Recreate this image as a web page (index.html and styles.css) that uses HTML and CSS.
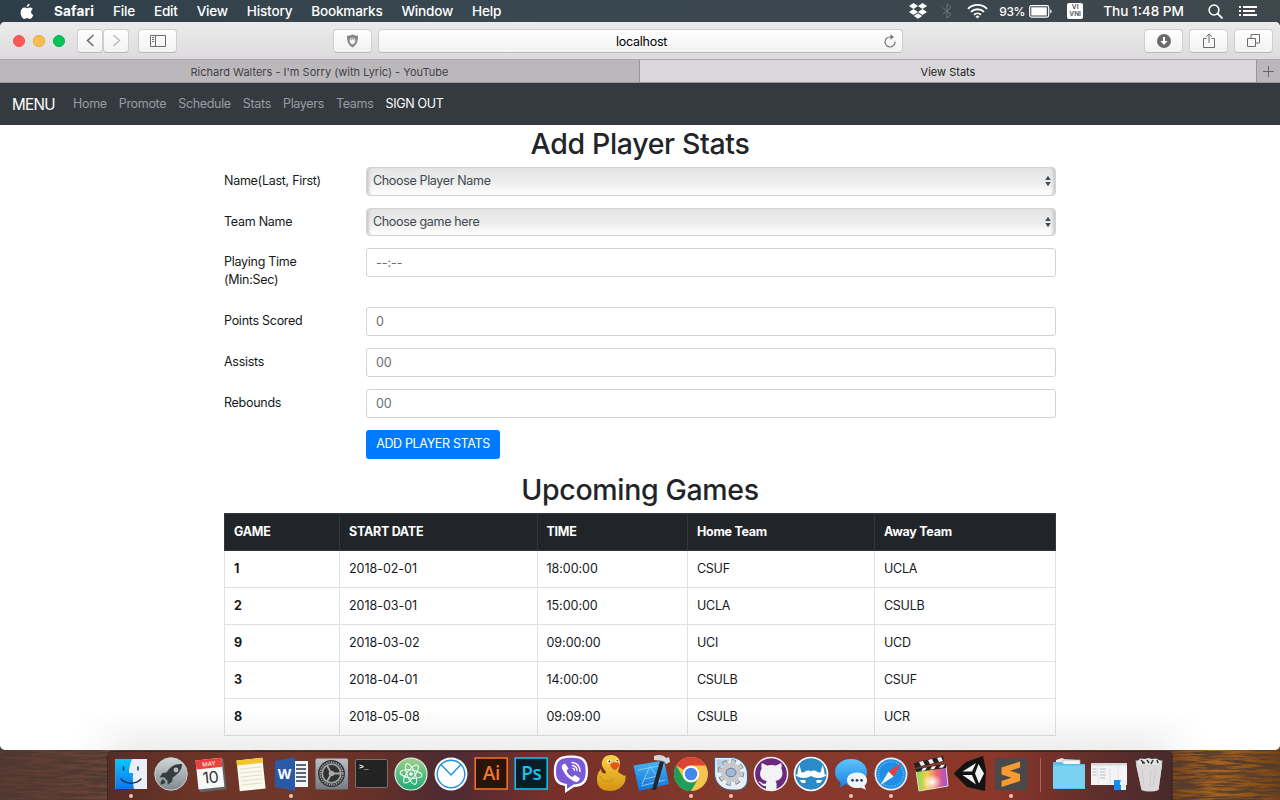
FILE: index.html
```html
<!DOCTYPE html>
<html lang="en">
<head>
<meta charset="utf-8">
<title>View Stats</title>
<link rel="stylesheet" href="styles.css">
</head>
<body>
<div class="desktop">
  <header class="menubar">
    <svg class="apple" width="14" height="17" viewBox="0 0 14 17" fill="#fff"><path d="M9.6.8c.1 1.800-1.300 3.300-2.900 3.300C6.500 2.500 8 .9 9.600.8zM6.900 5.200c.6 0 1.500-.8 2.900-.8 1.300 0 2.400.7 3 1.600-2.500 1.500-2.100 4.900.5 5.900-.6 1.700-1.900 4-3.400 4-1.100 0-1.500-.7-2.800-.7s-1.700.7-2.800.7C2.600 16 .6 12.600.6 9.500c0-3 1.900-5 4-5 1.100 0 1.700.7 2.300.7z"/></svg>
    <nav class="menus"><b>Safari</b><span>File</span><span>Edit</span><span>View</span><span>History</span><span>Bookmarks</span><span>Window</span><span>Help</span></nav>
    <div class="status">
      <svg width="20" height="18" viewBox="0 0 20 18" fill="#fff"><path d="M5.500 1 10 4 5.500 7 1 4zM14.500 1 19 4l-4.500 3L10 4zM5.500 7 10 10l-4.500 3L1 10zM14.500 7 19 10l-4.500 3L10 10zM10 11.200l4.200 2.800-4.200 2.800L5.800 14z"/></svg>
      <svg class="bt" width="10" height="16" viewBox="0 0 10 16" fill="none" stroke="#6c757a"><path d="M.5 4.500 9 11.500 5 15V1l4 3.500-8.500 7"/></svg>
      <svg class="wifi" width="21" height="16" viewBox="0 0 21 16" fill="none" stroke="#fff" stroke-width="1.900"><path d="M1 5.800a13.500 13.500 0 0 1 19 0M4 8.900a9.200 9.200 0 0 1 13 0M7 11.800a5 5 0 0 1 7 0"/><path d="M10.500 15.500l-2-2a2.800 2.800 0 0 1 4 0z" fill="#fff" stroke="none"/></svg>
      <span class="pct">93%</span>
      <svg class="bat" width="24" height="13" viewBox="0 0 24 13"><rect x=".7" y=".7" width="19" height="11.400" rx="1.800" fill="none" stroke="#fff" stroke-width="1.200"/><rect x="2.300" y="2.300" width="15.500" height="8.200" fill="#fff"/><path d="M21.200 4.300c2 .8 2 3.400 0 4.200z" fill="#fff"/></svg>
      <span class="vni"><i>VI</i><i>VNI</i></span>
      <span class="clock">Thu 1:48 PM</span>
      <svg class="search" width="15" height="15" viewBox="0 0 15 15" fill="none" stroke="#fff" stroke-width="1.500"><circle cx="6" cy="6" r="4.900"/><path d="M9.500 9.500l5 5" stroke-width="1.800"/></svg>
      <svg width="19" height="12" viewBox="0 0 19 12" fill="#fff"><path d="M0 1h2v2H0zM4 1h14v2H4zM0 5h2v2H0zM4 5h12v2H4zM0 9h2v2H0zM4 9h14v2H4z"/></svg>
    </div>
  </header>

  <main class="window">
    <div class="toolbar">
      <div class="lights"><i class="red"></i><i class="yellow"></i><i class="green"></i></div>
      <div class="history"><span class="btn"><svg width="9" height="13" viewBox="0 0 9 13" fill="none" stroke="#696969" stroke-width="1.500"><path d="M7.500 1 1.500 6.500l6 5.500"/></svg></span><span class="btn"><svg width="9" height="13" viewBox="0 0 9 13" fill="none" stroke="#bcbcbc" stroke-width="1.500"><path d="M1.500 1l6 5.500-6 5.500"/></svg></span></div>
      <span class="btn wide sidebar"><svg width="16" height="12" viewBox="0 0 16 12" fill="none" stroke="#6c6c6c"><path d="M.5.500h15v11H.5zM5.500.500v11M2 2.500h2M2 4.500h2M2 6.500h2"/></svg></span>
      <span class="btn wide shield"><svg width="13" height="14" viewBox="0 0 13 14"><path d="M6.500.5C8.500 1.500 10 1.700 12 1.700c0 6-1.300 9.300-5.500 11.800C2.300 11 1 7.700 1 1.700c2 0 3.500-.2 5.500-1.200z" fill="#848484"/><path d="M6.500 3.600a3.200 3.200 0 0 1 3 3.200c0 1.700-1 3-3 4-2-1-3-2.300-3-4a3.200 3.200 0 0 1 3-3.200z" fill="#e4e4e4"/><path d="M4.800 6.200h3.400v2.600H4.800z" fill="#fff"/><path d="M5.300 6.200v-.6a1.200 1.200 0 0 1 2.400 0v.6" fill="none" stroke="#848484" stroke-width=".8"/></svg></span>
      <div class="btn address"><span>localhost</span><svg class="reload" width="12" height="14" viewBox="0 0 12 14" fill="none" stroke="#757575" stroke-width="1.200"><path d="M11 7.500A5 5 0 1 1 6 3h2"/><path d="M6.500.300 10 3 6.500 5.700z" fill="#757575" stroke="none"/></svg></div>
      <span class="btn wide dl"><svg width="14" height="14" viewBox="0 0 14 14"><circle cx="7" cy="7" r="7" fill="#6b6b6b"/><path d="M6 3h2v4h2.600L7 11 3.400 7H6z" fill="#fff"/></svg></span>
      <span class="btn wide"><svg width="12" height="16" viewBox="0 0 12 16" fill="none" stroke="#6c6c6c"><path d="M3.500 5.500h-3v9h11v-9h-3M6 10V1M3.300 3.700 6 1l2.700 2.700"/></svg></span>
      <span class="btn wide"><svg width="13" height="13" viewBox="0 0 13 13" fill="none" stroke="#6c6c6c"><path d="M.5 4.500h8v8h-8zM4 4.500v-4h8.500V9h-4"/></svg></span>
    </div>
    <div class="tabs"><div class="tab">Richard Walters - I'm Sorry (with Lyric) - YouTube</div><div class="tab active">View Stats</div><div class="plus"><svg width="11" height="11" viewBox="0 0 11 11" stroke="#666"><path d="M5.500 0v11M0 5.500h11"/></svg></div></div>

    <nav class="navbar"><a class="brand">MENU</a><a>Home</a><a>Promote</a><a>Schedule</a><a>Stats</a><a>Players</a><a>Teams</a><a class="out">SIGN OUT</a></nav>

    <section class="container">
      <h2>Add Player Stats</h2>
      <form class="form">
        <label>Name(Last, First)</label><div class="field select"><span>Choose Player Name</span><svg width="6" height="12" viewBox="0 0 6 12" fill="#454c53"><path d="M3 .8 5.800 5H.2zM3 11.200.2 7h5.600z"/></svg></div>
        <label>Team Name</label><div class="field select second"><span>Choose game here</span><svg width="6" height="12" viewBox="0 0 6 12" fill="#454c53"><path d="M3 .8 5.800 5H.2zM3 11.200.2 7h5.600z"/></svg></div>
        <label class="tall">Playing Time<br>(Min:Sec)</label><div class="field num">--:--</div>
        <label>Points Scored</label><div class="field num">0</div>
        <label>Assists</label><div class="field num">00</div>
        <label>Rebounds</label><div class="field num">00</div>
        <button type="button">ADD PLAYER STATS</button>
      </form>
      <h2 class="games">Upcoming Games</h2>
      <table>
        <colgroup><col class="c1"><col class="c2"><col class="c3"><col class="c4"><col class="c5"></colgroup>
        <thead><tr><th>GAME</th><th>START DATE</th><th>TIME</th><th>Home Team</th><th>Away Team</th></tr></thead>
        <tbody>
          <tr><th>1</th><td class="num">2018-02-01</td><td class="num">18:00:00</td><td>CSUF</td><td>UCLA</td></tr>
          <tr><th>2</th><td class="num">2018-03-01</td><td class="num">15:00:00</td><td>UCLA</td><td>CSULB</td></tr>
          <tr><th>9</th><td class="num">2018-03-02</td><td class="num">09:00:00</td><td>UCI</td><td>UCD</td></tr>
          <tr><th>3</th><td class="num">2018-04-01</td><td class="num">14:00:00</td><td>CSULB</td><td>CSUF</td></tr>
          <tr><th>8</th><td class="num">2018-05-08</td><td class="num">09:09:00</td><td>CSULB</td><td>UCR</td></tr>
        </tbody>
      </table>
    </section>
    <div class="shade"></div>
  </main>

  <footer class="wallpaper">
    <svg class="wood" width="1280" height="56" viewBox="0 0 1280 56">
      <defs>
        <linearGradient id="base" x1="0" x2="1" y1="0" y2="0"><stop offset="0" stop-color="#5a3a32"/><stop offset=".08" stop-color="#6a443a"/><stop offset=".9" stop-color="#6a3a18"/><stop offset=".95" stop-color="#a8641f"/><stop offset="1" stop-color="#7a4515"/></linearGradient>
        <filter id="grain" x="0" y="0" width="100%" height="100%"><feTurbulence type="fractalNoise" baseFrequency="0.035 0.38" numOctaves="4" seed="7"/><feColorMatrix values="0 0 0 0 .07  0 0 0 0 .04  0 0 0 0 .03  4 0 0 0 -1.500"/></filter>
      </defs>
      <rect width="1280" height="56" fill="url(#base)"/><rect width="1280" height="56" filter="url(#grain)" opacity=".8"/>
    </svg>
    <div class="dock">
      <svg class="app" viewBox="0 0 40 48"><defs><linearGradient id="fb" x1="0" x2="0" y1="0" y2="1"><stop offset="0" stop-color="#06c8fb"/><stop offset="1" stop-color="#1572ee"/></linearGradient></defs><path d="M4.500 7H36v30H4.500z" fill="#e9eff8"/><path d="M4.500 7H21c-2 5-3 9-3 14h4c-.3 6 0 11 1 16H4.500z" fill="url(#fb)"/><path d="M12.500 15v3M27 15v3M10 27c5 5.500 15 5.500 20 0" fill="none" stroke="#143250" stroke-width="1.500" stroke-linecap="round"/><circle class="run" cx="20" cy="44" r="2"/></svg>
      <svg class="app" viewBox="0 0 40 48"><defs><linearGradient id="rk" x1="0" x2="0" y1="0" y2="1"><stop offset="0" stop-color="#d1d6d8"/><stop offset="1" stop-color="#7e888c"/></linearGradient></defs><circle cx="20" cy="22" r="16.300" fill="url(#rk)" stroke="#c5cccc" stroke-width="1"/><path d="M31 12c-7-.500-12 3-15.500 8.500l-4 .5-3 4.500 4.500-.3 3.500 3.500.2 4 4.500-3.200.5-4C27 22 31 18 31 12zM12 27c-2 1-2.500 3.500-2.500 5.500 2 0 4-.6 5-2.500z" fill="#353c40"/><circle cx="25" cy="18" r="2.400" fill="#b4bcbe"/></svg>
      <svg class="app" viewBox="0 0 40 48"><g transform="rotate(-6 20 22)"><rect x="7" y="8" width="27" height="31" rx="1" fill="#626262"/><rect x="6" y="7" width="26" height="29" fill="#f8f8f8"/><path d="M6 7h26v9H6z" fill="#e8423e"/><text x="19" y="13.800" text-anchor="middle" class="t-month">MAY</text><text x="19" y="31" text-anchor="middle" class="t-day">10</text></g></svg>
      <svg class="app" viewBox="0 0 40 48"><g transform="rotate(-6 20 22)"><rect x="7" y="7" width="26" height="31" fill="#fbf9ec"/><path d="M7 7h26v5H7z" fill="#f5c52c"/><path d="M9 16h22M9 20h22M9 24h22M9 28h22M9 32h22" stroke="#d9d6cb" stroke-width=".8"/></g></svg>
      <svg class="app" viewBox="0 0 40 48"><path d="M22 9h15v26H22z" fill="#f4f5f7"/><path d="M25 13h10M25 17h10M25 21h10M25 25h10M25 29h10" stroke="#28394f" stroke-width="1.600"/><path d="M4 9l20-4v34L4 35z" fill="#285aa7"/><text x="13.500" y="27" text-anchor="middle" class="t-word">W</text><circle class="run" cx="20" cy="44" r="2"/></svg>
      <svg class="app" viewBox="0 0 40 48"><defs><linearGradient id="sp" x1="0" x2="0" y1="0" y2="1"><stop offset="0" stop-color="#b9c1c7"/><stop offset="1" stop-color="#747b80"/></linearGradient></defs><rect x="4.500" y="6.500" width="32.500" height="31" rx="1.500" fill="url(#sp)"/><circle cx="20.500" cy="21.500" r="13.500" fill="#303234"/><circle cx="20.500" cy="21.500" r="11.400" fill="none" stroke="#aaa" stroke-width="1.600" stroke-dasharray="1.300 1.100"/><circle cx="20.500" cy="21.500" r="9.300" fill="none" stroke="#a2a2a2" stroke-width="1.800"/><circle cx="20.500" cy="21.500" r="2.800" fill="#aaa"/><path d="M20.500 21.500h9M20.500 21.500l-4.500-8M20.500 21.500l-4.500 8" stroke="#aaa" stroke-width="1.800"/></svg>
      <svg class="app" viewBox="0 0 40 48"><rect x="4.500" y="7.500" width="32" height="28" rx="1.500" fill="#232323" stroke="#77716f"/><text x="8" y="16.500" class="t-term">&gt;_</text></svg>
      <svg class="app" viewBox="0 0 40 48"><defs><linearGradient id="at" x1="0" x2="0" y1="0" y2="1"><stop offset="0" stop-color="#a2d18b"/><stop offset="1" stop-color="#18ab75"/></linearGradient></defs><circle cx="20" cy="22" r="16" fill="url(#at)" stroke="#e5efe6" stroke-width="1.200"/><g fill="none" stroke="#fff" stroke-width="1"><ellipse cx="20" cy="22" rx="11" ry="4" transform="rotate(8 20 22)"/><ellipse cx="20" cy="22" rx="11" ry="4" transform="rotate(68 20 22)"/><ellipse cx="20" cy="22" rx="11" ry="4" transform="rotate(128 20 22)"/></g><circle cx="20" cy="22" r="1.800" fill="#fff"/></svg>
      <svg class="app" viewBox="0 0 40 48"><circle cx="20" cy="22" r="16.500" fill="#fff"/><circle cx="20" cy="22" r="13.800" fill="none" stroke="#2593e1" stroke-width="1.500"/><path d="M10 12.500l10 10.500 10-10.500" fill="none" stroke="#2593e1" stroke-width="1.500"/></svg>
      <svg class="app" viewBox="0 0 40 48"><rect x="4.200" y="6" width="32" height="31" fill="#2a1407" stroke="#ef6f25" stroke-width="1.600"/><text x="20.300" y="28" text-anchor="middle" class="t-adobe ai">Ai</text></svg>
      <svg class="app" viewBox="0 0 40 48"><rect x="4.200" y="6" width="32" height="31" fill="#071e28" stroke="#0bc1ea" stroke-width="1.600"/><text x="20.300" y="28" text-anchor="middle" class="t-adobe ps">Ps</text></svg>
      <svg class="app" viewBox="0 0 40 48"><path d="M20 3.500c12 0 17 3.500 17 16s-6 15-14 15.500L14 41v-7C6 32.500 2.800 29 2.800 19.500 2.800 7 8 3.500 20 3.500z" fill="#fff"/><path d="M20 5.700c11 0 14.700 3 14.700 13.800S29.500 32 22.500 32.600L16 37v-5C8.500 31 5 28 5 19.500 5 8.700 9 5.700 20 5.700z" fill="#7b5ad9"/><path d="M14 11.500c-3 1-4 3-2.500 6C14 23 18 27 23.500 29.500c3 1.300 4.500-.5 5.500-3l-5-3.500-2.500 2c-3-1-5-3.500-6-6.500l2-2z" fill="#fff"/><path d="M21 10.500c5 .5 8 4 8 9M21.500 13.500c3 .5 4.500 2.500 4.500 5M22 16.300c1 .2 1.500.8 1.500 2" fill="none" stroke="#fff" stroke-width="1.300" stroke-linecap="round"/></svg>
      <svg class="app" viewBox="0 0 40 48"><defs><linearGradient id="dk" x1="0" x2="0" y1="0" y2="1"><stop offset="0" stop-color="#fbd244"/><stop offset="1" stop-color="#d39312"/></linearGradient></defs><path d="M20 3c6 0 9 4 9 8.500 0 4-2 6.500-2 8.500 5 3 7 5 7.500 3 1.500 8-5 16-15 16S5.500 34 6 26c.2-4 2-7 4-9 0 3 1.500 4.500 4 4.500 1 0 1.500-1 0-3-3-3.500-3.500-6-3-8.500C11.800 6 15 3 20 3z" fill="url(#dk)"/><path d="M19 12c3-2 7-2 8.500-1l1.500 2.500-4 4.500c-3 0-5-2-6-6z" fill="#e5551e"/><circle cx="18" cy="9.500" r="2" fill="#fff"/><circle cx="18.400" cy="9.500" r="1" fill="#222"/><circle cx="26" cy="8.500" r="1.500" fill="#fff"/><circle cx="26.300" cy="8.500" r=".8" fill="#222"/><path d="M9 24c2 6 10 8 14 2" fill="none" stroke="#c98f17"/></svg>
      <svg class="app" viewBox="0 0 40 48"><defs><linearGradient id="xc" x1="0" x2="0" y1="0" y2="1"><stop offset="0" stop-color="#45b5f4"/><stop offset="1" stop-color="#1473d5"/></linearGradient></defs><path d="M2.500 13.500 33 8.500l5 23.500-30 7z" fill="url(#xc)"/><path d="M11 32l8-18 10 15M13 27l14-3M7 18l26-5M10 34l24-6" fill="none" stroke="#90cdf5" stroke-width=".9"/><path d="M29 9l4 1-8 28h-4z" fill="#252525"/><path d="M23 4c5-2 10-1 12 2l3-1 1 5-4 2-2-3-10-1z" fill="#d4d9dc"/></svg>
      <svg class="app" viewBox="0 0 40 48"><circle cx="20" cy="22" r="17" fill="#f3c54f"/><path d="M5.300 13.500a17 17 0 0 1 29.400 0H20a8.500 8.500 0 0 0-7.400 4.300z" fill="#dc4437"/><path d="M5.300 13.500A17 17 0 0 0 20 39l7.400-12.800a8.500 8.500 0 0 1-14.800 0z" fill="#1b9f59"/><circle cx="20" cy="22" r="8.200" fill="#fff"/><circle cx="20" cy="22" r="6.300" fill="#4386ed"/><circle class="run" cx="20" cy="44" r="2"/></svg>
      <svg class="app" viewBox="0 0 40 48"><path d="M3.500 5.500H20A16.500 16.500 0 0 1 36.500 22v6a10 10 0 0 1-10 10H20A16.500 16.500 0 0 1 3.500 22z" fill="#e8eef5" stroke="#445b78" stroke-width="1.200"/><path d="M5.500 7.500h14L6 20z" fill="#b7cde3"/><circle cx="20" cy="20.500" r="11.300" fill="none" stroke="#747b84" stroke-width="4" stroke-dasharray="4.440 4.440"/><circle cx="20" cy="20.500" r="11" fill="none" stroke="#c9ccd1" stroke-width="3" stroke-dasharray="3.440 5.200" stroke-dashoffset="-.4"/><circle cx="20" cy="20.500" r="7.300" fill="none" stroke="#c6c9cd" stroke-width="5"/><ellipse cx="20" cy="20.500" rx="5" ry="4.300" fill="#9db9d8" stroke="#6f7882"/><circle class="run" cx="20" cy="44" r="2"/></svg>
      <svg class="app" viewBox="0 0 40 48"><circle cx="20" cy="22" r="16.600" fill="#6b287d" stroke="#eee" stroke-width="1.500"/><path d="M11 11l5 2.500c3-.8 6-.8 9 0l5-2.500c1 2 .8 4 .3 5.500C33 22 31 28 24.500 29c1.500 2 1 5 1 8.500a16 16 0 0 1-10.500 0V34c-4 .8-5-3-8-4.500 4-.5 4 3.500 8 2 0-1 .3-2 1-2.500C9 28 7.500 22 10.700 16.500 10 14 10.400 12.500 11 11z" fill="#f3f2f4"/></svg>
      <svg class="app" viewBox="0 0 40 48"><circle cx="20" cy="22" r="16.500" fill="#2b8bc8" stroke="#fff" stroke-width="1.600"/><path d="M8.500 13l2 7.500c3 .5 4-2 6.500-2 1.500 0 2.500.5 3 1 .5-.5 1.500-1 3-1 2.500 0 3.500 2.500 6.500 2l2-7.500c1.300 3.500 2 6.500 2 9.500H36c-3 4-11 4.500-16 1.500-5 3-13 2.500-16-1.500h2.500c0-3 .7-6 2-9.500zM8.500 28h6v3h-3.500zM31.500 28h-6v3h3.500z" fill="#fff"/></svg>
      <svg class="app" viewBox="0 0 40 48"><defs><linearGradient id="ms" x1="0" x2="0" y1="0" y2="1"><stop offset="0" stop-color="#60c4fb"/><stop offset="1" stop-color="#1680e5"/></linearGradient></defs><path d="M20 7c9 0 16 5.500 16 13s-7 13-16 13c-2 0-4-.2-5.500-.7L8 36c1.500-2 1.800-3.500 1.500-5.500C6 28 4 24 4 20 4 12.500 11 7 20 7z" fill="url(#ms)"/><path d="M26 20.500c6 0 10 3.300 10 7.700 0 2.500-1 4.300-2.500 5.500l1.500 4-5-2c-1.200.3-2.500.4-4 .4-6 0-10-3.500-10-7.900s4-7.700 10-7.700z" fill="#edf6fb"/><g fill="#303c46"><circle cx="21.500" cy="28.300" r="1.400"/><circle cx="26" cy="28.300" r="1.400"/><circle cx="30.500" cy="28.300" r="1.400"/></g><circle class="run" cx="20" cy="44" r="2"/></svg>
      <svg class="app" viewBox="0 0 40 48"><circle cx="20" cy="22" r="16.500" fill="#e7edf2"/><circle cx="20" cy="22" r="14.800" fill="#218ee5"/><circle cx="20" cy="22" r="12.500" fill="none" stroke="#7cc4f5" stroke-width="1.600" stroke-dasharray=".8 1.650"/><path d="M31 11 22.500 24.500l-5-5z" fill="#ee3b36"/><path d="M9.500 33l8-13.500 5 5z" fill="#f0f3f5"/><circle class="run" cx="20" cy="44" r="2"/></svg>
      <svg class="app" viewBox="0 0 40 48"><defs><linearGradient id="fc"><stop offset="0" stop-color="#82db48"/><stop offset=".35" stop-color="#f4cc50"/><stop offset=".65" stop-color="#ed6370"/><stop offset="1" stop-color="#a04fda"/></linearGradient><radialGradient id="fw"><stop offset="0" stop-color="#fff"/><stop offset="1" stop-color="#fff" stop-opacity="0"/></radialGradient></defs><path d="M5 18l30-4 2 20-29 5z" fill="url(#fc)" stroke="#ddd"/><ellipse cx="21" cy="30" rx="10" ry="8" fill="url(#fw)"/><path d="M3 11 32 4l1 5L4 16zM4 17l31-5v4L5 20z" fill="#222"/><path d="M8 10l4-1 2 4-4 1zM17 8l4-1 2 4-4 1zM26 6l4-1 2 4-4 1zM12 16l4-.6-2 3-4 .7zM21 14.500l4-.6-2 3-4 .7zM30 13l4-.6-2 3-4 .7z" fill="#eee"/></svg>
      <svg class="app" viewBox="0 0 40 48"><path d="M2.500 21.500 15 10l17-6 3 14-1 21-18-4z" fill="#131313"/><path d="M11.500 19.500 25 11l-4 8.500zM27.500 12 33 21.500l-5 10-4-10zM11.500 23H21l4 9.500z" fill="#f2f2f2"/></svg>
      <svg class="app" viewBox="0 0 40 48"><rect x="4" y="6" width="32" height="32" rx="1.500" fill="#494949"/><path d="M10.500 15.500 29 9.500v6l-10 3.300 10 3.200v7l-18.500 6v-6l10-3.200-10-3.300z" fill="#f89a30"/><circle class="run" cx="20" cy="44" r="2"/></svg>
      <i class="divider"></i>
      <svg class="app" viewBox="0 0 40 48"><path d="M7 8l6-2 2 1 13 1-1 8H7z" fill="#e7e7e7"/><path d="M15 8h16v8H8z" fill="#f6f6f6" stroke="#aaa" stroke-width=".7"/><path d="M4 10h9l2 2h21v25H4z" fill="#5bbde8"/><path d="M4 13.500h32V36H4z" fill="#7ad2f3"/></svg>
      <svg class="app" viewBox="0 0 40 48"><path d="M2 11h36v22H2z" fill="#f4f4f5"/><path d="M2 11h36v2.500H2z" fill="#d5d6d8"/><path d="M9 14v19M21 14v19M29 14v19" stroke="#dde0e4" stroke-width=".8"/><path d="M3.500 17h4M3.500 20h4M3.500 23h4M11 17h6M11 20h5M11 23h6M11 26h5" stroke="#b3bfcc" stroke-width="1"/><path d="M25 28h12v10H25z" fill="#e8eff6"/><path d="M25 28h7c-1 2-1.500 4-1 5h1v5h-7z" fill="#138cf0"/></svg>
      <svg class="app" viewBox="0 0 40 48"><path d="M6.500 8.500h27l-4 29.500c-4 2-13 2-17 0z" fill="#cfcdcd"/><path d="M8 10l3-3.500 5 .5 3-1 4 1 4-.5 5 2.500-1 4H9z" fill="#e4e4e4"/><path d="M12 8l3 3M18 8l2 3M24 8l-2 4M28 8l1 3M13 11h3" stroke="#343b42" stroke-width="1.600"/><path d="M6.800 12c6 2 20 2 26.400 0l-3.600 25.500c-4 1.800-13 1.800-17 0z" fill="#dbd9da"/><path d="M13 17l2 18M22 18l-1 17M27 16l-3 18" stroke="#cbc9c9"/></svg>
    </div>
  </footer>
</div>
</body>
</html>
```
FILE: styles.css
```css
* { box-sizing: border-box; }
body { margin: 0; font-family: Inter, "Liberation Sans", sans-serif; color: #16191c; }
svg { display: block; flex: none; }
i { font-style: normal; }
.desktop { width: 1280px; height: 800px; overflow: hidden; display: flex; flex-direction: column; background: #3c464c; }

.menubar { height: 22px; flex: none; display: flex; align-items: center; padding: 0 22px 0 20px; color: #fff; font-size: 13.6px; font-weight: 500; background: linear-gradient(90deg, #2f3f49, #384750 35%, #3e474c); }
.menus { display: flex; gap: 18.9px; margin-left: 20px; letter-spacing: -.2px; }
.menus b { letter-spacing: .15px; }
.status { display: flex; align-items: center; margin-left: auto; }
.bt { margin-left: 14px; }
.wifi { margin-left: 15px; }
.pct { margin-left: 11px; font-size: 12px; letter-spacing: -.35px; }
.bat { margin-left: 4px; }
.vni { width: 16px; height: 16px; margin-left: 14px; border-radius: 2px; background: #fff; color: #59636a; display: flex; flex-direction: column; align-items: center; justify-content: center; font-size: 6.500px; line-height: 7px; font-weight: 700; }
.clock { margin-left: 20px; letter-spacing: 0; }
.search { margin: 1px 16px 0 24px; }

.window { position: relative; height: 728px; flex: none; background: #fff; border-radius: 5px; overflow: hidden; z-index: 1; }
.toolbar { height: 37px; display: flex; align-items: center; padding: 0 7px 0 13px; background: linear-gradient(#ecebec, #dddbdd); }
.lights { display: flex; gap: 8px; }
.lights i { width: 12px; height: 12px; border-radius: 50%; }
.red { background: #fb5a57; border: 1px solid #e4504e; }
.yellow { background: #fdbc4e; border: 1px solid #e3a53c; }
.green { background: #05c657; border: 1px solid #08ad4b; }
.history { display: flex; margin-left: 12px; }
.btn { height: 24px; width: 26px; border: 1px solid #cfcdcf; border-bottom-color: #bbb9bb; border-radius: 4px; background: linear-gradient(#fefefe, #f3f2f3); display: flex; align-items: center; justify-content: center; }
.btn.wide { width: 39px; }
.sidebar { margin-left: 9px; }
.shield { margin-left: 156px; }
.address { width: 525px; margin-left: 6px; padding: 2px 0 0 2px; font-size: 12.5px; letter-spacing: -.25px; color: #000; position: relative; }
.reload { position: absolute; right: 6px; top: 4px; }
.dl { margin: 0 0 0 241px; }
.dl ~ .btn { margin-left: 6px; }
.tabs { height: 24px; display: flex; border-top: 1px solid #a9a7aa; border-bottom: 1px solid #999; font-size: 11px; color: #424144; background: #bab8bb; }
.tab { width: 640px; display: flex; align-items: center; justify-content: center; border-right: 1px solid #97959a; padding-top: 1px; letter-spacing: .01px; }
.tab.active { width: 617px; background: #d9d7da; color: #202022; }
.plus { flex: 1; display: flex; align-items: center; justify-content: center; }

.navbar { height: 42px; display: flex; align-items: center; gap: 12px; padding: 0 12px 1px; background: #343a40; color: #999ca0; font-size: 12.5px; letter-spacing: -.32px; }
.navbar .brand { font-size: 15.2px; letter-spacing: -.65px; color: #fff; width: 49px; padding-top: 2px; }
.navbar .out { color: #fff; }

.container { width: 832px; margin: 0 auto; font-size: 12.5px; letter-spacing: -.27px; }
h2 { margin: 0; height: 42px; padding-top: 2px; font-size: 28.500px; line-height: 34px; font-weight: 500; letter-spacing: -.35px; text-align: center; color: #212529; }
.form { display: grid; grid-template-columns: 142px 690px; row-gap: 12px; align-items: start; }
.form label { line-height: 18px; padding-top: 5px; }
.form label.tall { height: 47px; }
.field { height: 29px; border: 1px solid #ced4da; border-radius: 3px; padding: 0 9px 1px; display: flex; align-items: center; color: #666f77; background: #fff; }
.select { padding: 0 4px 1px 6px; justify-content: space-between; letter-spacing: -.34px; color: #42494f; border-radius: 4px; background: linear-gradient(#e5e5e5, #ececec 50%, #fff); box-shadow: inset 4px 0 3px -2px #c7c9cb, inset -4px 0 3px -2px #c7c9cb; }
.select span { padding-bottom: 1px; }
.select.second { height: 28px; }
.select.second span { padding-bottom: 0; }
.num { letter-spacing: -.03px; }
.form button { grid-column: 2; justify-self: start; width: 134px; height: 29px; border: 0; border-radius: 3px; padding: 0 0 2px; background: #007bff; color: #fff; font: 12.5px Inter, sans-serif; letter-spacing: -.34px; }
.games { margin-top: 12px; }
table { width: 832px; border-collapse: collapse; table-layout: fixed; }
.c1 { width: 115px; } .c2 { width: 198px; } .c3 { width: 150px; } .c4 { width: 187px; }
th, td { height: 37px; padding: 0 9px 1px; border: 1px solid #dee2e6; text-align: left; }
td:nth-child(3), th:nth-child(3) { padding-left: 8.5px; }
thead th { background: #212529; color: #fff; border-color: #32383e; }
.shade { position: absolute; left: 75px; right: 75px; bottom: 0; height: 40px; background: linear-gradient(transparent, rgba(0,0,0,.065)); -webkit-mask-image: linear-gradient(90deg, transparent, #000 60px, #000 1070px, transparent); mask-image: linear-gradient(90deg, transparent, #000 60px, #000 1070px, transparent); }

.wallpaper { height: 50px; flex: none; display: flex; justify-content: center; position: relative; }
.wood { position: absolute; left: 0; top: -6px; }
.dock { position: relative; width: 1064px; height: 48px; margin: 2px 1px 0 0; padding-left: 3px; display: flex; border-radius: 4px 4px 0 0; box-shadow: 0 0 0 1px rgba(30,15,12,.5); background: linear-gradient(90deg, #562d27, #6c3427 8%, #70372a 18%, #653028 25%, #4c2a34 32%, #75302a 41%, #853a2c 60%, #8b3629 84%, #67302c 91%, #462a2c); }
.app { width: 40px; height: 48px; }
.run { fill: #f8bfb4; }
.divider { width: 1px; height: 34px; margin: 6px 8px 0 9px; background: #a8625b; }
.t-month { font: 6px Inter, sans-serif; fill: #fff; }
.t-day { font: 16px Inter, sans-serif; fill: #333; letter-spacing: -.5px; }
.t-word { font: 700 14px "Open Sans", sans-serif; fill: #fff; }
.t-term { font: 700 8px "Liberation Mono", monospace; fill: #fff; }
.t-adobe { font: 600 19px "Open Sans", sans-serif; letter-spacing: -.5px; }
.ai { fill: #f4752c; } .ps { fill: #17c5eb; }
```
